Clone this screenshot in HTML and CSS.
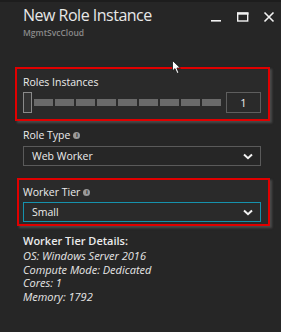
FILE: index.html
```html
<!DOCTYPE html>
<html lang="en">
<head>
    <meta charset="UTF-8">
    <title>New Role Instance</title>
    <link rel="stylesheet" href="styles.css">
</head>
<body>
    <div class="blade">
        <div class="header">
            <div class="titles">
                <h1>New Role Instance</h1>
                <div class="subtitle">MgmtSvcCloud</div>
            </div>
            <div class="controls">
                <svg class="ctl" width="12" height="12" viewBox="0 0 12 12"><rect x="1" y="9" width="10" height="1.6" fill="#f2f2f2"/></svg>
                <svg class="ctl" width="13" height="12" viewBox="0 0 13 12"><rect x="1.7" y="2" width="10" height="8" fill="none" stroke="#f2f2f2" stroke-width="1.4"/><rect x="1" y="1.5" width="11.5" height="2.2" fill="#f2f2f2"/></svg>
                <svg class="ctl" width="12" height="12" viewBox="0 0 12 12"><path d="M1.5 1.5 L10.5 10.5 M10.5 1.5 L1.5 10.5" stroke="#f2f2f2" stroke-width="1.6"/></svg>
            </div>
        </div>

        <div class="content">
            <div class="highlight first">
                <div class="label">Roles Instances</div>
                <div class="slider-row">
                    <div class="slider">
                        <div class="thumb"></div>
                        <div class="seg"></div><div class="seg"></div><div class="seg"></div>
                        <div class="seg"></div><div class="seg"></div><div class="seg"></div>
                        <div class="seg"></div><div class="seg"></div><div class="seg"></div>
                    </div>
                    <div class="count">1</div>
                </div>
            </div>

            <div class="field">
                <div class="label">Role Type <span class="info">i</span></div>
                <div class="select">
                    <span>Web Worker</span>
                    <svg width="10" height="7" viewBox="0 0 10 7"><path d="M1 1.5 L5 5.2 L9 1.5" fill="none" stroke="#f2f2f2" stroke-width="2"/></svg>
                </div>
            </div>

            <div class="highlight second">
                <div class="label">Worker Tier <span class="info">i</span></div>
                <div class="select active">
                    <span>Small</span>
                    <svg width="10" height="7" viewBox="0 0 10 7"><path d="M1 1.5 L5 5.2 L9 1.5" fill="none" stroke="#f2f2f2" stroke-width="2"/></svg>
                </div>
            </div>

            <div class="details">
                <div class="details-title">Worker Tier Details:</div>
                <div class="line">OS: Windows Server 2016</div>
                <div class="line">Compute Mode: Dedicated</div>
                <div class="line">Cores: 1</div>
                <div class="line">Memory: 1792</div>
            </div>
        </div>

        <svg class="cursor" width="10" height="15" viewBox="0 0 10 15"><path d="M0.5 0.5 L0.5 11 L3 8.6 L5 13.5 L6.8 12.7 L4.9 8 L8.3 8 Z" fill="#ffffff" stroke="#111" stroke-width="0.8"/></svg>
    </div>
</body>
</html>
```

FILE: styles.css
```css
body {
    margin: 0;
    background: #262626;
    font-family: 'Open Sans', 'Noto Sans', sans-serif;
    color: #ececec;
    overflow: hidden;
}
.blade {
    position: relative;
    width: 281px;
    height: 332px;
    border-top: 2px solid #1d1d1d;
    box-sizing: border-box;
}
.header {
    display: flex;
    justify-content: space-between;
    padding: 2px 6px 0 23px;
    height: 58px;
    box-sizing: border-box;
}
h1 {
    margin: 0;
    font-size: 16px;
    font-weight: 400;
    line-height: 22px;
    color: #e8e8e8;
    letter-spacing: -0.5px;
}
.subtitle {
    font-size: 8.5px;
    font-weight: 600;
    color: #8a8a8a;
    line-height: 10px;
    margin-top: 2px;
}
.controls {
    display: flex;
    gap: 14px;
    padding-top: 7px;
}
.content {
    padding: 0 11px 0 15px;
}
.label {
    font-size: 10.5px;
    line-height: 14px;
    color: #ececec;
    display: flex;
    align-items: center;
    gap: 3px;
}
.info {
    display: inline-block;
    width: 7px;
    height: 7px;
    border-radius: 50%;
    background: #9a9a9a;
    color: #262626;
    font-size: 6px;
    line-height: 7px;
    text-align: center;
    font-weight: 700;
}
.highlight {
    border: 2px solid #e00000;
    box-shadow: 2px 2px 2px rgba(90, 90, 90, 0.7);
    background: #2a2a2a;
}
.highlight.first {
    margin-top: 7px;
    height: 54px;
    box-sizing: border-box;
    padding: 6px 7px 0 6px;
}
.slider-row {
    display: flex;
    justify-content: space-between;
    align-items: center;
    margin-top: 3px;
}
.slider {
    display: flex;
    align-items: center;
    gap: 2px;
}
.thumb {
    width: 7px;
    height: 19px;
    border: 1px solid #8a8a8a;
    background: #333;
}
.seg {
    width: 19px;
    height: 7px;
    background: #6a6a6a;
}
.seg:first-of-type {
    width: 8px;
}
.count {
    width: 33px;
    height: 19px;
    border: 1px solid #5e5e5e;
    font-size: 11px;
    line-height: 19px;
    text-align: center;
}
.field {
    padding: 7px 9px 0 8px;
}
.select {
    margin-top: 4px;
    height: 20px;
    box-sizing: border-box;
    border: 1px solid #5a5a5a;
    display: flex;
    justify-content: space-between;
    align-items: center;
    padding: 0 7px 0 8px;
    font-size: 10.5px;
}
.select.active {
    border-color: #1692ad;
}
.highlight.second {
    margin: 12px 0 0 2px;
    height: 48px;
    box-sizing: border-box;
    padding: 5px 7px 0 4px;
}
.highlight.second .select {
    margin-top: 3px;
}
.details {
    padding: 7px 0 0 8px;
}
.details-title {
    font-size: 11px;
    font-weight: 600;
    line-height: 15px;
    margin-bottom: 1px;
}
.line {
    font-size: 11px;
    font-style: italic;
    line-height: 13.5px;
    color: #e6e6e6;
}
.cursor {
    position: absolute;
    left: 172px;
    top: 58px;
}
```
